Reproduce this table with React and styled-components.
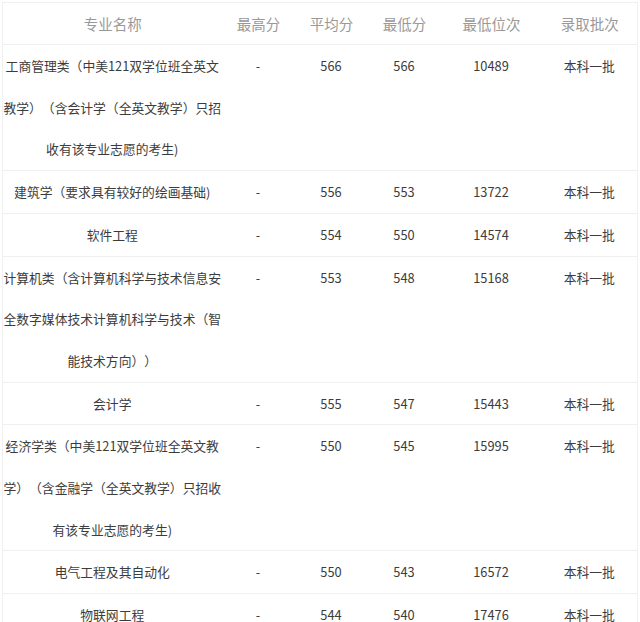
import styled, { createGlobalStyle } from "styled-components";

const GlobalStyle = createGlobalStyle`
  html, body {
    margin: 0;
    padding: 0;
    background: #fff;
  }
  body {
    font-family: "Noto Sans CJK SC", "Noto Sans", sans-serif;
  }
`;

const Page = styled.div`
  padding: 2px 0 0 2px;
  width: 636px;
  overflow: hidden;
`;

const Table = styled.table`
  width: 635px;
  table-layout: fixed;
  border-collapse: collapse;
  border-top: 1px solid #f0f0f0;
  border-left: 1px solid #f0f0f0;
  border-right: 1px solid #f0f0f0;
`;

const HeadCell = styled.th`
  height: 41px;
  padding: 0;
  font-size: 14.5px;
  font-weight: normal;
  color: #999;
  text-align: center;
  border-bottom: 1px solid #f0f0f0;
`;

const Cell = styled.td`
  padding: 0 1px 0 0;
  font-size: 12.8px;
  line-height: 41.7px;
  color: #3c3c3c;
  text-align: center;
  vertical-align: top;
  border-bottom: 1px solid #f0f0f0;
  word-break: break-all;
  text-spacing-trim: space-all;
`;

const columns = [
  { title: "专业名称", width: 220 },
  { title: "最高分", width: 72 },
  { title: "平均分", width: 74 },
  { title: "最低分", width: 72 },
  { title: "最低位次", width: 102 },
  { title: "录取批次", width: 95 },
];

const rows = [
  ["工商管理类（中美121双学位班全英文教学）（含会计学（全英文教学）只招收有该专业志愿的考生)", "-", "566", "566", "10489", "本科一批"],
  ["建筑学（要求具有较好的绘画基础)", "-", "556", "553", "13722", "本科一批"],
  ["软件工程", "-", "554", "550", "14574", "本科一批"],
  ["计算机类（含计算机科学与技术信息安全数字媒体技术计算机科学与技术（智能技术方向））", "-", "553", "548", "15168", "本科一批"],
  ["会计学", "-", "555", "547", "15443", "本科一批"],
  ["经济学类（中美121双学位班全英文教学）（含金融学（全英文教学）只招收有该专业志愿的考生)", "-", "550", "545", "15995", "本科一批"],
  ["电气工程及其自动化", "-", "550", "543", "16572", "本科一批"],
  ["物联网工程", "-", "544", "540", "17476", "本科一批"],
];

export default function App() {
  return (
    <>
      <GlobalStyle />
      <Page>
        <Table>
          <colgroup>
            {columns.map((c) => (
              <col key={c.title} style={{ width: c.width }} />
            ))}
          </colgroup>
          <thead>
            <tr>
              {columns.map((c) => (
                <HeadCell key={c.title}>{c.title}</HeadCell>
              ))}
            </tr>
          </thead>
          <tbody>
            {rows.map((r, i) => (
              <tr key={i}>
                {r.map((v, j) => (
                  <Cell key={j}>{v}</Cell>
                ))}
              </tr>
            ))}
          </tbody>
        </Table>
      </Page>
    </>
  );
}
